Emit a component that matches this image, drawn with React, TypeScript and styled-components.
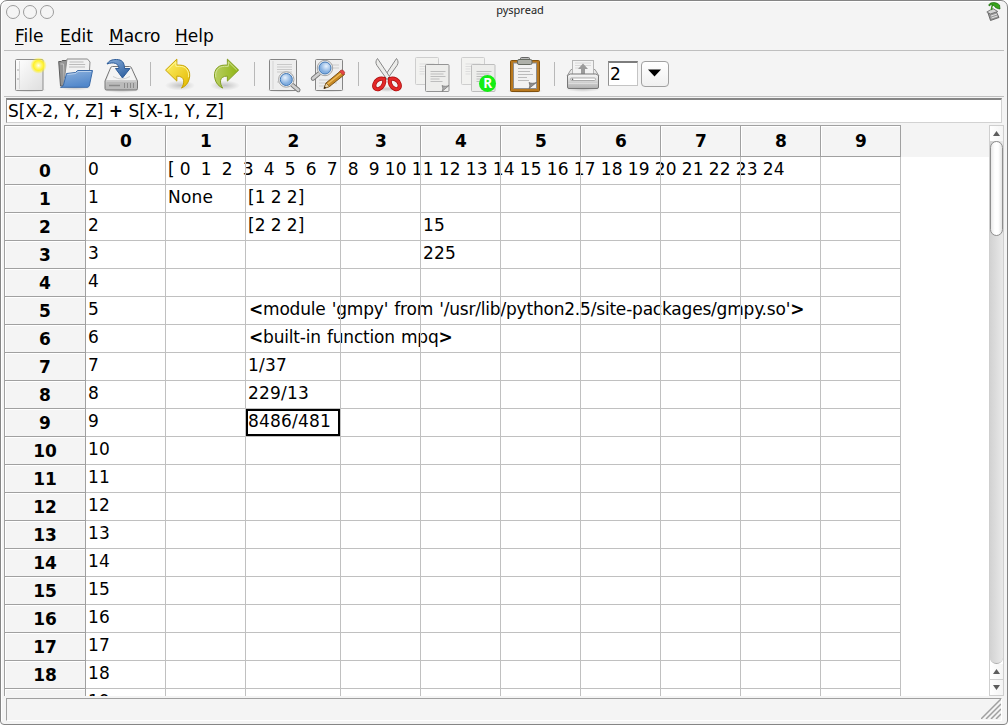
import React from "react";
import styled, { createGlobalStyle } from "styled-components";

const Global = createGlobalStyle`
  * { box-sizing: border-box; }
  html, body { margin: 0; padding: 0; background: #fff; overflow: hidden; }
`;

const Window = styled.div`
  width: 1008px;
  height: 725px;
  display: flex;
  flex-direction: column;
  background: #f4f4f4;
  border: 1px solid #858585;
  border-radius: 7px 7px 4px 4px;
  box-shadow: inset 1px 1px 0 #fff;
  font-family: "DejaVu Sans", sans-serif;
  font-size: 17px;
  color: #000;
  overflow: hidden;
`;

const TitleBar = styled.header`
  height: 22px;
  flex: none;
  display: grid;
  grid-template-columns: 60px 1fr 21px;
  align-items: center;
  padding-left: 5px;
`;

const Lights = styled.div`
  display: flex;
  gap: 3px;
`;

const Light = styled.span`
  width: 14px;
  height: 14px;
  border: 1px solid #9b9b9b;
  border-radius: 50%;
  background: #f5f5f5;
`;

const Title = styled.h1`
  margin: 0;
  padding: 0 12px 4px 0;
  font-family: "Noto Sans", sans-serif;
  font-size: 11px;
  line-height: 18px;
  font-weight: normal;
  text-align: center;
  color: #222;
`;

const AppBadge = styled.span`
  height: 22px;
  svg { display: block; }
`;

const MenuBar = styled.nav`
  height: 28px;
  flex: none;
  margin: 0 3px;
  padding-left: 11px;
  display: flex;
  gap: 16px;
  border-bottom: 1px solid #bfbfbf;
  line-height: 26px;
`;

const MenuItem = styled.span<{ $w: number }>`
  width: ${(p) => p.$w}px;
  white-space: nowrap;
`;

const Accel = styled.span`
  text-decoration: underline;
  text-underline-offset: 2px;
  text-decoration-thickness: 1px;
`;

const ToolBar = styled.div`
  height: 46px;
  flex: none;
  margin: 0 3px;
  padding-left: 8px;
  display: flex;
  align-items: center;
  border-bottom: 1px solid #bfbfbf;
`;

const Tool = styled.span<{ $after?: number }>`
  width: 36px;
  height: 36px;
  margin-right: ${(p) => p.$after ?? 10}px;
  flex: none;
  svg { display: block; overflow: visible; }
`;

const Separator = styled.span<{ $after: number }>`
  width: 1px;
  height: 24px;
  margin-right: ${(p) => p.$after}px;
  background: #b8b8b8;
  flex: none;
`;

const TableField = styled.div`
  width: 30px;
  height: 25px;
  margin-right: 3px;
  padding-left: 1px;
  background: #fff;
  border: 1px solid #c4c4c4;
  border-top: 2px solid #7d7d7d;
  border-left-color: #929292;
  line-height: 22px;
`;

const DropButton = styled.div`
  width: 28px;
  height: 26px;
  display: flex;
  align-items: center;
  justify-content: center;
  padding: 0 1px 2px 0;
  border: 1px solid #a0a0a0;
  border-radius: 4px;
  background: linear-gradient(#fff, #f0f0f0);
`;

const Formula = styled.div`
  height: 25px;
  flex: none;
  margin: 1px 5px 2px 5px;
  padding-left: 1px;
  background: #fff;
  border: 1px solid #d2d2d2;
  border-top: 2px solid #858585;
  border-left-color: #929292;
  line-height: 22px;
  white-space: pre;
`;

const Body = styled.main`
  height: 571px;
  flex: none;
  margin: 0 3px;
  display: flex;
  background: linear-gradient(#f4f4f4 32px, #fff 32px);
`;

const Sheet = styled.div`
  flex: 1;
  overflow: hidden;
  isolation: isolate;
  display: grid;
  grid-template-columns: 82px 80px 80px 95px repeat(8, 80px);
  grid-template-rows: 32px;
  grid-auto-rows: 28px;
`;

const HeadCell = styled.div<{ $corner?: boolean; $row?: boolean }>`
  border-right: 1px solid #a0a0a0;
  border-bottom: 1px solid #a0a0a0;
  border-top: ${(p) => (p.$row ? "none" : "1px solid #a0a0a0")};
  border-left: ${(p) => (p.$row || p.$corner ? "1px solid #a0a0a0" : "none")};
  box-shadow: inset 1px 1px 0 #fff;
  padding-left: ${(p) => (p.$row ? 0 : 1)}px;
  background: #f4f4f4;
  font-weight: bold;
  text-align: center;
  line-height: ${(p) => (p.$row ? 28 : 31)}px;
`;

const Cell = styled.div`
  position: relative;
  padding-left: 2px;
  line-height: 25px;
  white-space: pre;
  &::after {
    content: "";
    position: absolute;
    inset: 0;
    z-index: 1;
    border-right: 1px solid #c0c0c0;
    border-bottom: 1px solid #c0c0c0;
  }
`;

const CellText = styled.span<{ $prose?: boolean }>`
  margin-left: ${(p) => (p.$prose ? 1 : 0)}px;
  letter-spacing: ${(p) => (p.$prose ? -0.2 : 0.18)}px;
  word-spacing: ${(p) => (p.$prose ? 1 : -0.58)}px;
`;

const Cursor = styled.div`
  position: absolute;
  inset: 0 1px 1px 0;
  border: 2px solid #000;
`;

const ScrollBar = styled.div`
  width: 15px;
  display: flex;
  flex-direction: column;
  border: 1px solid #cfcfcf;
  background: #fff;
`;

const ScrollButton = styled.div<{ $h: number }>`
  height: ${(p) => p.$h}px;
  flex: none;
  display: flex;
  align-items: center;
  justify-content: center;
  background: linear-gradient(90deg, #fff, #f4f4f4);
  & + & { border-top: 1px solid #cfcfcf; }
`;

const Track = styled.div`
  flex: 1;
  background: linear-gradient(90deg, #d2d2d2, #e9e9e9);
  border-bottom: 1px solid #aaa;
  border-radius: 0 0 7px 7px;
`;

const Thumb = styled.div`
  height: 95px;
  border: 1px solid #8e8e8e;
  border-radius: 7px;
  background: linear-gradient(90deg, #e8e8e8, #fff 35%, #fff 65%, #e4e4e4);
`;

const StatusBar = styled.footer`
  height: 23px;
  flex: none;
  margin: 2px 5px 0 5px;
  display: flex;
  justify-content: flex-end;
  border: 1px solid #fff;
  border-top-color: #a0a0a0;
  border-left-color: #a0a0a0;
`;

function Gradients() {
  return (
    <svg width="0" height="0" display="block">
      <defs>
        <linearGradient id="paper" x2="1" y2="1">
          <stop stopColor="#fff" /><stop offset="1" stopColor="#dedede" />
        </linearGradient>
        <linearGradient id="blue" x2="0.4" y2="1">
          <stop stopColor="#8fb3de" /><stop offset="1" stopColor="#5288cb" />
        </linearGradient>
        <linearGradient id="arrow" x2="0.6" y2="1">
          <stop stopColor="#86acd9" /><stop offset="1" stopColor="#3465a4" />
        </linearGradient>
        <linearGradient id="metal" x2="0" y2="1">
          <stop stopColor="#fafafa" /><stop offset="1" stopColor="#b0b0b0" />
        </linearGradient>
        <linearGradient id="yellow" x2="1" y2="1">
          <stop stopColor="#fff36a" /><stop offset="1" stopColor="#e3b800" />
        </linearGradient>
        <linearGradient id="green" x2="1" y2="0">
          <stop stopColor="#8fb512" /><stop offset="1" stopColor="#b9cf63" />
        </linearGradient>
        <radialGradient id="sun">
          <stop stopColor="#fffef0" /><stop offset="0.3" stopColor="#fff880" />
          <stop offset="0.6" stopColor="#fff12a" /><stop offset="1" stopColor="#fff12a" stopOpacity="0" />
        </radialGradient>
        <radialGradient id="shade">
          <stop stopColor="#000" stopOpacity="0.2" /><stop offset="1" stopColor="#000" stopOpacity="0" />
        </radialGradient>
        <radialGradient id="glass" cx="0.4" cy="0.35">
          <stop stopColor="#e8f2fd" /><stop offset="1" stopColor="#82aee0" />
        </radialGradient>
      </defs>
    </svg>
  );
}

const Icon = ({ children }: { children: React.ReactNode }) => (
  <svg width="36" height="36" viewBox="0 0 36 36">{children}</svg>
);

const NewIcon = () => (
  <Icon>
    <ellipse cx="17.5" cy="34" rx="17" ry="2.5" fill="url(#shade)" />
    <rect x="3.5" y="3.5" width="27.5" height="31" rx="1" fill="url(#paper)" stroke="#8d8d8d" />
    <path d="M7.5 5v28" stroke="#d8d8d8" />
    <path d="M5 14h2M5 23h2" stroke="#aaa" />
    <circle cx="26.500" cy="9.500" r="8.300" fill="url(#sun)" />
  </Icon>
);

const OpenIcon = () => (
  <Icon>
    <ellipse cx="17" cy="31.500" rx="17" ry="3" fill="url(#shade)" />
    <path d="M.7 5.500h2.500l1-1h6l1.500 1.500H29V30H2.500z" fill="#949494" stroke="#5d5d5d" />
    <path d="M2.500 8h3l1 21" fill="none" stroke="#c4c4c4" />
    <path d="M6.500 22L9 3h20.500l2.500 3-1 16z" fill="#f1f1f1" stroke="#8b8b8b" />
    <path d="M11.500 6h14M11.200 8.500h16M11 11h16" stroke="#bbb" />
    <path d="M8.500 17.500l9-1 2-2h15L31.500 29c-.3 1.500-1 2.300-2.500 2.300H2.500c1.800-.3 2.800-1.300 3.300-3.500z" fill="url(#blue)" stroke="#3a6aa8" strokeLinejoin="round" />
    <path d="M9.400 18.500l8.500-1 2-2h13.300" fill="none" stroke="#b8d0ec" />
  </Icon>
);

const SaveIcon = () => (
  <Icon>
    <ellipse cx="17.500" cy="34" rx="19" ry="3" fill="url(#shade)" />
    <path d="M6.500 12q.5-1.500 2-1.500h17q1.500 0 2 1.500L33.500 25v7.500q0 1.500-1.500 1.500H2.500q-1.500 0-1.500-1.500V25z" fill="url(#metal)" stroke="#777" />
    <path d="M7.500 12h19l5.500 12H2.500z" fill="#f4f4f4" />
    <path d="M9 20.500q8.500 5 17 0" fill="none" stroke="#d0d0d0" />
    <rect x="2.500" y="26" width="30" height="7" rx="1" fill="#bababa" />
    <path d="M5 29.500h11" stroke="#8a8a8a" strokeWidth="1.500" />
    <path d="M20.500 27v5M23.500 27v5M26.500 27v5M29.500 27v5" stroke="#8b8b8b" />
    <path d="M3 8C5 4.500 8 3.500 12.500 3.500c5.500 0 8 3 8 9h5.500L18.500 22 11.500 12.500h3.500C15 7.500 9.500 5.500 3 8z" fill="url(#arrow)" stroke="#2e5c98" strokeLinejoin="round" />
  </Icon>
);

const UndoIcon = () => (
  <Icon>
    <ellipse cx="17" cy="29.500" rx="15" ry="5" fill="url(#shade)" />
    <g transform="translate(.2 .6) scale(.94 1)">
      <path d="M2.500 13.500L14.500 2.500v6h3c8.500 0 12 6.500 10.300 13.500-1.200 5-4.200 7.500-8.300 9.500 3.500-5 4-12-5-12v5z" fill="url(#yellow)" stroke="#c4a000" strokeLinejoin="round" />
      <path d="M4.500 13.500l9-8.300v4.500h4c6.500 0 10.500 4.800 9.300 11" fill="none" stroke="#fff799" />
    </g>
  </Icon>
);

const RedoIcon = () => (
  <Icon>
    <ellipse cx="16" cy="29.500" rx="15" ry="5" fill="url(#shade)" />
    <g transform="translate(32 .6) scale(-.94 1)">
      <path d="M2.500 13.500L14.500 2.500v6h3c8.500 0 12 6.500 10.300 13.500-1.200 5-4.200 7.500-8.300 9.500 3.500-5 4-12-5-12v5z" fill="url(#green)" stroke="#809c20" strokeLinejoin="round" />
      <path d="M4.500 13.500l9-8.300v4.500h4c6.500 0 10.500 4.800 9.300 11" fill="none" stroke="#d4e39a" />
    </g>
  </Icon>
);

const Lens = ({ x, y, left }: { x: number; y: number; left?: boolean }) => (
  <g transform={`translate(${x} ${y}) scale(${left ? -1 : 1} 1)`}>
    <path d="M6 5.500L12 10.500" stroke="#787878" strokeWidth="4.400" strokeLinecap="round" />
    <path d="M6 5.500L12 10.500" stroke="#d0d0d0" strokeWidth="2.600" strokeLinecap="round" />
    <circle r="7.700" fill="#f2f2f2" stroke="#a2a2a2" />
    <circle r="6" fill="url(#glass)" stroke="#4278b5" />
  </g>
);

const PreviewIcon = () => (
  <Icon>
    <ellipse cx="17" cy="34" rx="17" ry="2.500" fill="url(#shade)" />
    <rect x="3.500" y="3.500" width="27" height="31" rx="1" fill="#eee" stroke="#858585" />
    <path d="M7 5v28" stroke="#d4d4d4" />
    <path d="M11 8.500h15M11 11h15M11 13.500h15M11 16h15M11 26h13" stroke="#c9c9c9" />
    <Lens x={20.300} y={23.500} />
  </Icon>
);

const FindIcon = () => (
  <Icon>
    <ellipse cx="17" cy="34" rx="17" ry="2.500" fill="url(#shade)" />
    <rect x="3.500" y="3.500" width="27" height="31" rx="1" fill="#eee" stroke="#858585" />
    <path d="M10 9h17M10 12h17M7 24h18M7 27h18M7 30h12" stroke="#ccc" />
    <Lens x={13} y={12} left />
    <path d="M12 32.500l2-5.500L28.500 15l4 3.500L17.500 30.500z" fill="#c88a24" stroke="#704a12" strokeWidth=".9" />
    <path d="M15.500 28L30 16.500" stroke="#f0bd5d" strokeWidth="1.300" />
    <path d="M27.500 15.500l1.800-1.500q2.500-.3 3.700 3l-2 1.900z" fill="#e34646" stroke="#a33" strokeWidth=".6" />
    <path d="M12 32.500l2-5.500 3.500 3.500z" fill="#ead6ac" stroke="#704a12" strokeWidth=".6" />
    <path d="M12 32.500l.7-2 1.300 1.200z" />
  </Icon>
);

const CutIcon = () => (
  <Icon>
    <ellipse cx="18" cy="33" rx="13" ry="3" fill="url(#shade)" />
    <path d="M27.500 2.500c2 2.500 2 4.500.5 7L18 23.500l-2.500-3z" fill="#ececea" stroke="#888" />
    <path d="M8.500 2.500C6.500 5 6.500 7 8 9.500l10 14 2.500-3z" fill="#ececea" stroke="#888" />
    <g fill="none" transform="translate(0 1)">
      <path d="M15 22c1 3.500-.8 8.500-5 10-3.500 1-5.500-1.500-4.500-5S10.500 20.500 15 22z" stroke="#a90d0d" strokeWidth="4.200" />
      <path d="M21 22c-1 3.500.8 8.500 5 10 3.500 1 5.500-1.500 4.500-5S25.500 20.500 21 22z" stroke="#a90d0d" strokeWidth="4.200" />
      <path d="M15 22c1 3.500-.8 8.500-5 10-3.500 1-5.500-1.500-4.500-5S10.500 20.500 15 22z" stroke="#e22828" strokeWidth="2.800" />
      <path d="M21 22c-1 3.500.8 8.500 5 10 3.500 1 5.500-1.500 4.500-5S25.500 20.500 21 22z" stroke="#e22828" strokeWidth="2.800" />
    </g>
  </Icon>
);

const CopyIcon = ({ result }: { result?: boolean }) => (
  <Icon>
    <g transform="translate(-.5 0)">
      <rect x="1" y="1.500" width="23" height="27" rx="1" fill="#f2f2f0" stroke="#cecece" />
      <path d="M5 8h15M5 10.500h15M5 13h5M5 15.500h5M5 18h5" stroke="#ddd" />
      <rect x="11" y="8.500" width="23.500" height="27" rx="1" fill="#ededeb" stroke={result ? "#bdbdbd" : "#949494"} />
      <path d="M16 15.500h15M16 18h13M16 20.500h15M16 23h9M16 25.500h12" stroke="#bdbdbd" />
    </g>
    {result ? (
      <>
        <circle cx="26.500" cy="27.500" r="8.500" fill="#14ee14" />
        <text x="26.700" y="32.100" textAnchor="middle" fontFamily="Open Sans, sans-serif" fontWeight="bold" fontSize="13.500" fill="#fff">R</text>
      </>
    ) : (
      <path d="M27 35.500c1-2 1-4 0-6 2 1 4.500 1 7 0z" fill="#aaa" stroke="#777" strokeWidth=".7" />
    )}
  </Icon>
);

const PasteIcon = () => (
  <Icon>
    <ellipse cx="17" cy="35" rx="18" ry="2.500" fill="url(#shade)" />
    <rect x="2.500" y="4.500" width="29" height="31" rx="1" fill="#b9791f" stroke="#815210" />
    <rect x="5.500" y="7" width="23" height="25.500" fill="#f2f2f2" stroke="#8d8d8d" />
    <path d="M10 12.500h14M10 15.500h12M10 18.500h15M10 21.500h9M10 24.500h11" stroke="#bcbcbc" />
    <path d="M21 32.500c1-2 1-4 0-6 2 1 4.500 1 7.500 0z" fill="#8d8d8d" stroke="#666" strokeWidth=".7" />
    <path d="M12.500 4V2.500q0-1 1-1h7q1 0 1 1V4" fill="#bbb" stroke="#666" />
    <rect x="9.500" y="3.500" width="14.500" height="5" rx="1.500" fill="#aeb0a9" stroke="#666a61" />
  </Icon>
);

const PrintIcon = () => (
  <Icon>
    <ellipse cx="18" cy="33" rx="18" ry="3" fill="url(#shade)" />
    <path d="M6 13.500h24l4 6.500H2z" fill="#e8e8e8" stroke="#999" />
    <rect x="7.500" y="4.500" width="21" height="15" fill="#f3f3f3" stroke="#b5b5b5" />
    <path d="M10 7h16M10 9.500h16M10 12h9" stroke="#d8d8d8" />
    <path d="M18 7.500l5 5.500h-3v5.500h-4V13h-3z" fill="#9b9b9b" />
    <path d="M2.500 20q1-2 3-2h25q2 0 3 2v11q0 1.500-1.500 1.500H4q-1.500 0-1.500-1.500z" fill="url(#metal)" stroke="#777" />
    <rect x="5.500" y="22" width="25" height="2.500" rx="1.200" fill="#fff" stroke="#999" strokeWidth=".8" />
    <circle cx="7.500" cy="23.200" r=".8" fill="#555" />
    <path d="M3.500 27.500h29" stroke="#ddd" />
  </Icon>
);

const AppIcon = () => (
  <svg width="16" height="20" viewBox="0 0 16 20">
    <path d="M2 12l8-2 3 6.500-8.500 3z" fill="#999" stroke="#555" strokeWidth=".8" />
    <path d="M.8 11l6-3.500 5 3-7.500 2.500z" fill="#d4d4d4" stroke="#666" strokeWidth=".8" />
    <path d="M5 15l6-2M5.500 17l6-2" stroke="#e2e2e2" />
    <path d="M6 9c-1-2 0-5 2-6" fill="none" stroke="#38951d" strokeWidth="1.500" />
    <path d="M3 3.500C5 .8 10 .8 13.500 4l.5 4C10.500 7.500 9 6.500 8 4.500 6 3.500 5 3.500 3 5z" fill="#38a51b" stroke="#18640c" strokeWidth=".7" />
  </svg>
);

const Arrow = ({ down }: { down?: boolean }) => (
  <svg width="7" height="5" viewBox="0 0 7 5">
    <path d={down ? "M0 0h7L3.500 5z" : "M0 5h7L3.500 0z"} fill="#5c5c5c" />
  </svg>
);

/* Comparison and plus signs are drawn heavier than the letters around them. */
const Heavy = ({ text }: { text: string }) => (
  <>{text.split(/([<>+])/).map((part, i) => (i % 2 ? <b key={i}>{part}</b> : part))}</>
);

const columns = Array.from({ length: 10 }, (_, i) => i);
const rows = Array.from({ length: 20 }, (_, i) => i);
const vector =
  "[ " + Array.from({ length: 25 }, (_, i) => String(i).padStart(i ? 2 : 1, " ")).join(" ");

const entries: Record<string, string> = {
  "0:1": vector,
  "1:1": "None",
  "1:2": "[1 2 2]",
  "2:2": "[2 2 2]",
  "2:4": "15",
  "3:4": "225",
  "5:2": "<module 'gmpy' from '/usr/lib/python2.5/site-packages/gmpy.so'>",
  "6:2": "<built-in function mpq>",
  "7:2": "1/37",
  "8:2": "229/13",
  "9:2": "8486/481",
};

const menus: [string, number][] = [["File", 29], ["Edit", 33], ["Macro", 50], ["Help", 40]];

export default function App() {
  return (
    <>
      <Global />
      <Window>
        <TitleBar>
          <Lights><Light /><Light /><Light /></Lights>
          <Title>pyspread</Title>
          <AppBadge><AppIcon /></AppBadge>
        </TitleBar>
        <MenuBar>
          {menus.map(([name, w]) => (
            <MenuItem key={name} $w={w}><Accel>{name[0]}</Accel>{name.slice(1)}</MenuItem>
          ))}
        </MenuBar>
        <ToolBar>
          <Tool><NewIcon /></Tool>
          <Tool><OpenIcon /></Tool>
          <Tool><SaveIcon /></Tool>
          <Separator $after={12} />
          <Tool><UndoIcon /></Tool>
          <Tool $after={9}><RedoIcon /></Tool>
          <Separator $after={11} />
          <Tool><PreviewIcon /></Tool>
          <Tool><FindIcon /></Tool>
          <Separator $after={10} />
          <Tool><CutIcon /></Tool>
          <Tool><CopyIcon /></Tool>
          <Tool $after={11}><CopyIcon result /></Tool>
          <Tool><PasteIcon /></Tool>
          <Separator $after={10} />
          <Tool $after={7}><PrintIcon /></Tool>
          <TableField>2</TableField>
          <DropButton>
            <svg width="13" height="8" viewBox="0 0 13 8"><path d="M0 .500h13L6.500 7.500z" /></svg>
          </DropButton>
        </ToolBar>
        <Formula><Heavy text="S[X-2, Y, Z] + S[X-1, Y, Z]" /></Formula>
        <Body>
          <Sheet>
            <HeadCell $corner />
            {columns.map((c) => <HeadCell key={c}>{c}</HeadCell>)}
            <span />
            {rows.map((r) => (
              <React.Fragment key={r}>
                <HeadCell $row>{r}</HeadCell>
                {columns.map((c) => {
                  const text = c === 0 ? String(r) : entries[`${r}:${c}`];
                  return (
                    <Cell key={c}>
                      {r === 9 && c === 2 && <Cursor />}
                      {text && (
                        <CellText $prose={text.startsWith("<")}><Heavy text={text} /></CellText>
                      )}
                    </Cell>
                  );
                })}
                <span />
              </React.Fragment>
            ))}
          </Sheet>
          <ScrollBar>
            <ScrollButton $h={15}><Arrow /></ScrollButton>
            <Track><Thumb /></Track>
            <ScrollButton $h={15}><Arrow /></ScrollButton>
            <ScrollButton $h={16}><Arrow down /></ScrollButton>
          </ScrollBar>
        </Body>
        <StatusBar>
          <svg width="20" height="20" viewBox="0 0 20 20">
            <path d="M0 20L20 0M5 20L20 5M10 20L20 10M15 20l5-5" stroke="#a0a0a0" strokeWidth="1.500" />
          </svg>
        </StatusBar>
        <Gradients />
      </Window>
    </>
  );
}
